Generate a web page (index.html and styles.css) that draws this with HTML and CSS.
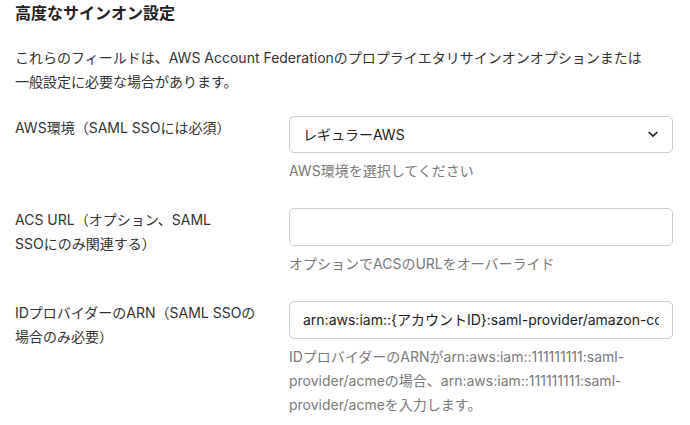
FILE: index.html
```html
<!DOCTYPE html>
<html lang="ja">
<head>
<meta charset="utf-8">
<link rel="stylesheet" href="styles.css">
</head>
<body>
<div class="page">
  <h2 class="title">高度なサインオン設定</h2>
  <p class="intro">これらのフィールドは、AWS Account Federationのプロプライエタリサインオンオプションまたは一般設定に必要な場合があります。</p>

  <div class="form">
    <div class="row">
      <label class="label">AWS環境（SAML SSOには必須）</label>
      <div class="field">
        <div class="control select">
          <span class="value">レギュラーAWS</span>
          <svg class="chev" width="10" height="7" viewBox="0 0 10 7"><path d="M1.2 1.5 L5 5.2 L8.8 1.5" fill="none" stroke="#222" stroke-width="1.7" stroke-linecap="round" stroke-linejoin="round"/></svg>
        </div>
        <div class="help">AWS環境を選択してください</div>
      </div>
    </div>

    <div class="row">
      <label class="label">ACS URL（オプション、SAML <span class="nw">SSOにのみ</span>関連する）</label>
      <div class="field">
        <div class="control input"></div>
        <div class="help">オプションでACSのURLをオーバーライド</div>
      </div>
    </div>

    <div class="row">
      <label class="label">IDプロバイダーのARN（SAML SSOの場合のみ必要）</label>
      <div class="field">
        <div class="control input"><span class="value clip">arn:aws:iam::{アカウントID}:saml-provider/amazon-connect</span></div>
        <div class="help">IDプロバイダーのARNがarn:aws:iam::111111111:saml-provider/acmeの場合、arn:aws:iam::111111111:saml-provider/acmeを入力します。</div>
      </div>
    </div>
  </div>
</div>
</body>
</html>
```

FILE: styles.css
```css
html, body {
  margin: 0;
  padding: 0;
  background: #ffffff;
}
body {
  font-family: "Inter", "Noto Sans CJK JP", sans-serif;
  font-size: 14px;
  line-height: 24px;
  color: #333333;
}
.page {
  padding: 1px 17px 0 15px;
}
.title {
  margin: 0;
  font-size: 16px;
  line-height: 24px;
  font-weight: bold;
  color: #222222;
}
.intro {
  margin: 21px 0 0 0;
  max-width: 640px;
}
.form {
  margin-top: 22px;
  display: flex;
  flex-direction: column;
  gap: 25px;
}
.row {
  display: grid;
  grid-template-columns: 274px 1fr;
}
.label {
  padding-right: 30px;
}
.nw {
  white-space: nowrap;
}
.field {
  display: flex;
  flex-direction: column;
  min-width: 0;
}
.control {
  box-sizing: border-box;
  height: 38px;
  border: 1px solid #cccccc;
  border-radius: 5px;
  display: flex;
  align-items: center;
  padding: 0 13px;
  overflow: hidden;
  white-space: nowrap;
}
.select {
  height: 37px;
  justify-content: space-between;
}
.value {
  color: #222222;
}
.clip {
  overflow: hidden;
}
.chev {
  margin-right: 1px;
}
.help {
  margin-top: 6px;
  color: #7a7a7a;
}
```
